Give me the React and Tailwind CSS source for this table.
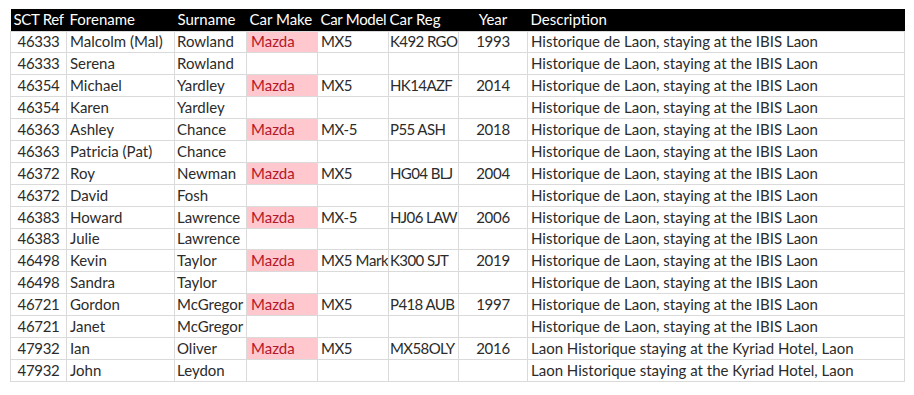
const cols = [
  { key: 'ref', label: 'SCT Ref', w: 'w-[56px]', head: 'text-left pl-[3px] tracking-[-0.3px]', cell: 'text-center tracking-[-0.3px]' },
  { key: 'fore', label: 'Forename', w: 'w-[108px]', head: 'text-left pl-[3px]', cell: 'text-left pl-[3px]' },
  { key: 'sur', label: 'Surname', w: 'w-[72px]', head: 'text-left pl-[3px]', cell: 'text-left pl-[2px]' },
  { key: 'make', label: 'Car Make', w: 'w-[71px]', head: 'text-left pl-[3px]', cell: 'text-left pl-[4px]' },
  { key: 'model', label: 'Car Model', w: 'w-[71px]', head: 'text-left pl-[3px] tracking-[-0.3px]', cell: 'text-left pl-[3px] tracking-[-0.4px]' },
  { key: 'reg', label: 'Car Reg', w: 'w-[70px]', head: 'text-left pl-[1px]', cell: 'text-left pl-[1px] tracking-[-0.6px]' },
  { key: 'year', label: 'Year', w: 'w-[69px]', head: 'text-center', cell: 'text-center tracking-[-0.3px]' },
  { key: 'desc', label: 'Description', w: 'w-[377px]', head: 'text-left pl-[3px]', cell: 'text-left pl-[3px]' },
];

const ibis = 'Historique de Laon, staying at the IBIS Laon';
const kyriad = 'Laon Historique staying at the Kyriad Hotel, Laon';

const rows = [
  ['46333', 'Malcolm (Mal)', 'Rowland', 'Mazda', 'MX5', 'K492 RGO', '1993', ibis],
  ['46333', 'Serena', 'Rowland', '', '', '', '', ibis],
  ['46354', 'Michael', 'Yardley', 'Mazda', 'MX5', 'HK14AZF', '2014', ibis],
  ['46354', 'Karen', 'Yardley', '', '', '', '', ibis],
  ['46363', 'Ashley', 'Chance', 'Mazda', 'MX-5', 'P55 ASH', '2018', ibis],
  ['46363', 'Patricia (Pat)', 'Chance', '', '', '', '', ibis],
  ['46372', 'Roy', 'Newman', 'Mazda', 'MX5', 'HG04 BLJ', '2004', ibis],
  ['46372', 'David', 'Fosh', '', '', '', '', ibis],
  ['46383', 'Howard', 'Lawrence', 'Mazda', 'MX-5', 'HJ06 LAW', '2006', ibis],
  ['46383', 'Julie', 'Lawrence', '', '', '', '', ibis],
  ['46498', 'Kevin', 'Taylor', 'Mazda', 'MX5 Mark', 'K300 SJT', '2019', ibis],
  ['46498', 'Sandra', 'Taylor', '', '', '', '', ibis],
  ['46721', 'Gordon', 'McGregor', 'Mazda', 'MX5', 'P418 AUB', '1997', ibis],
  ['46721', 'Janet', 'McGregor', '', '', '', '', ibis],
  ['47932', 'Ian', 'Oliver', 'Mazda', 'MX5', 'MX58OLY', '2016', kyriad],
  ['47932', 'John', 'Leydon', '', '', '', '', kyriad],
];

export default function App() {
  return (
    <div className="min-h-[395px] w-[914px] bg-white pt-[9px] pl-[10px] font-['Lato','Liberation_Sans',sans-serif] text-[15px] leading-none text-[#2b2b2b]">
      <table className="table-fixed border-collapse w-[894px]">
        <colgroup>
          {cols.map((c) => (
            <col key={c.key} className={c.w} />
          ))}
        </colgroup>
        <thead>
          <tr className="h-[22px] bg-black text-white">
            {cols.map((c) => (
              <th key={c.key} className={`${c.head} font-normal whitespace-nowrap overflow-hidden`}>
                {c.label}
              </th>
            ))}
          </tr>
        </thead>
        <tbody>
          {rows.map((r, i) => (
            <tr key={i} className="h-[21.9px]">
              {r.map((v, j) => {
                const isMazda = j === 3 && v === 'Mazda';
                return (
                  <td
                    key={j}
                    className={`${cols[j].cell} border border-[#dadada] whitespace-nowrap overflow-hidden ${
                      isMazda ? 'bg-[#ffc7ce] text-[#b3172b]' : ''
                    }`}
                  >
                    {v}
                  </td>
                );
              })}
            </tr>
          ))}
        </tbody>
      </table>
    </div>
  );
}
